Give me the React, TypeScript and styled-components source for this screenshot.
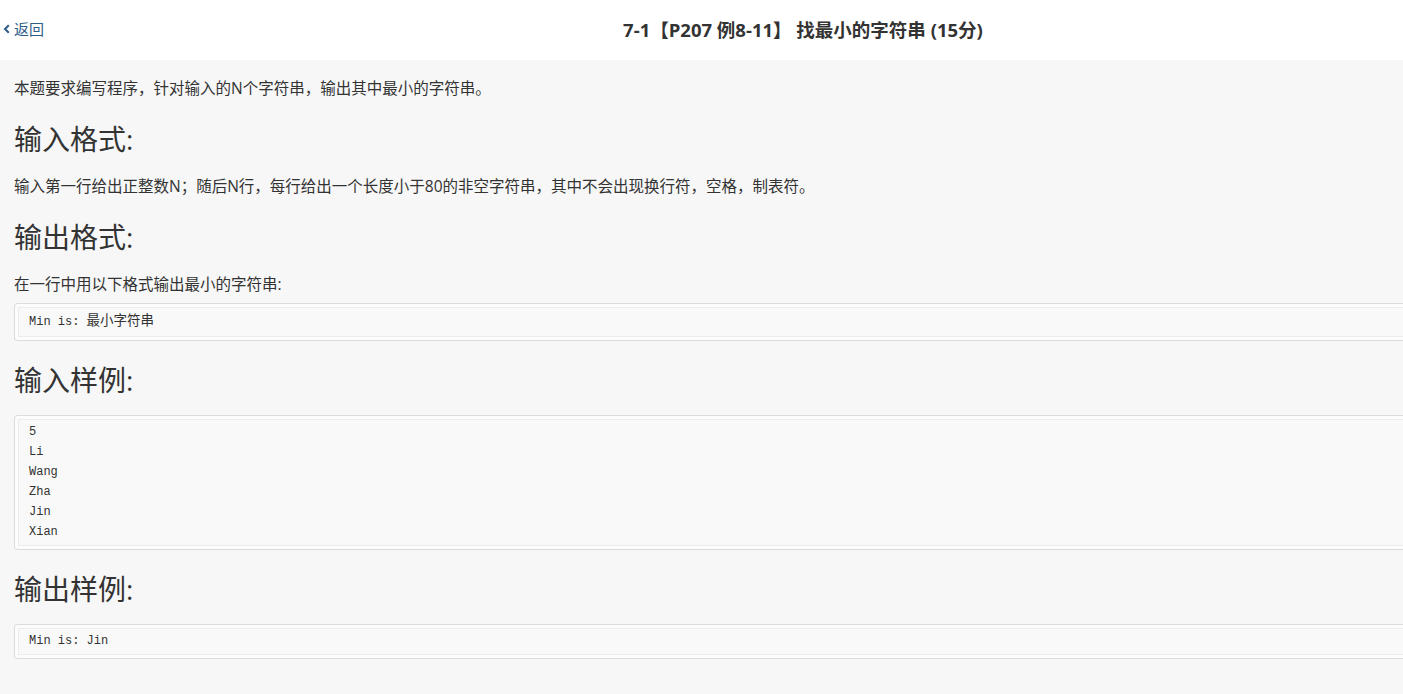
import React from "react";
import styled, { createGlobalStyle } from "styled-components";

const GlobalStyle = createGlobalStyle`
  html, body {
    margin: 0;
    padding: 0;
    background: #f7f7f7;
    overflow: hidden;
  }
  body {
    font-family: "Open Sans", "Noto Sans CJK SC", sans-serif;
    color: #333;
  }
`;

const PAGE_WIDTH = 1606;

const Page = styled.div`
  width: ${PAGE_WIDTH}px;
  min-height: 694px;
  background: #f7f7f7;
`;

const Header = styled.header`
  height: 60px;
  box-sizing: border-box;
  padding-bottom: 3px;
  background: #fff;
  display: flex;
  align-items: center;
  position: relative;
`;

const BackLink = styled.a`
  display: flex;
  align-items: center;
  gap: 2px;
  padding-left: 2px;
  font-size: 15px;
  color: #2d5d87;
  text-decoration: none;
  cursor: pointer;
  svg {
    width: 10px;
    height: 10px;
  }
`;

const Title = styled.h1`
  position: absolute;
  left: 0;
  right: 0;
  margin: 0;
  text-align: center;
  font-size: 18.5px;
  font-weight: 700;
  color: #333;
  pointer-events: none;
`;

const Content = styled.main`
  padding: 16px 0 40px 14px;
`;

const Text = styled.p`
  margin: 0;
  font-size: 15.5px;
  line-height: 24px;
  color: #333;
`;

const Heading = styled.h2`
  margin: 19px 0 15px;
  font-size: 28px;
  font-weight: 400;
  line-height: 40px;
  color: #333;
`;

const CodeBlock = styled.pre`
  margin: 7px 0 0;
  padding: 8px 14px 8px;
  background: #f9f9f9;
  border: 1px solid #dcdcdc;
  border-radius: 3px;
  box-shadow: inset 0 0 0 3px #fcfcfc, inset 0 0 0 4px #ececec;
  font-family: "Liberation Mono", "Noto Sans CJK SC", monospace;
  font-size: 12px;
  line-height: 20px;
  color: #333;
  white-space: pre;
`;

const Cjk = styled.span`
  font-size: 13.5px;
`;

const SampleBlock = styled(CodeBlock)`
  margin-top: 1px;
  padding-top: 6px;
  padding-bottom: 7px;
`;

const sampleInput = ["5", "Li", "Wang", "Zha", "Jin", "Xian"];

const App = () => {
  return (
    <Page>
      <GlobalStyle />
      <Header>
        <BackLink>
          <svg viewBox="0 0 10 10">
            <path
              d="M6.8 1.2 L3 5 L6.8 8.8"
              fill="none"
              stroke="#2d5d87"
              strokeWidth="2"
            />
          </svg>
          返回
        </BackLink>
        <Title>7-1【P207 例8-11】 找最小的字符串 (15分)</Title>
      </Header>
      <Content>
        <Text>本题要求编写程序，针对输入的N个字符串，输出其中最小的字符串。</Text>
        <Heading>输入格式:</Heading>
        <Text>
          输入第一行给出正整数N；随后N行，每行给出一个长度小于80的非空字符串，其中不会出现换行符，空格，制表符。
        </Text>
        <Heading>输出格式:</Heading>
        <Text>在一行中用以下格式输出最小的字符串:</Text>
        <CodeBlock>
          Min is: <Cjk>最小字符串</Cjk>
        </CodeBlock>
        <Heading>输入样例:</Heading>
        <SampleBlock>{sampleInput.join("\n")}</SampleBlock>
        <Heading>输出样例:</Heading>
        <SampleBlock>Min is: Jin</SampleBlock>
      </Content>
    </Page>
  );
};

export default App;
